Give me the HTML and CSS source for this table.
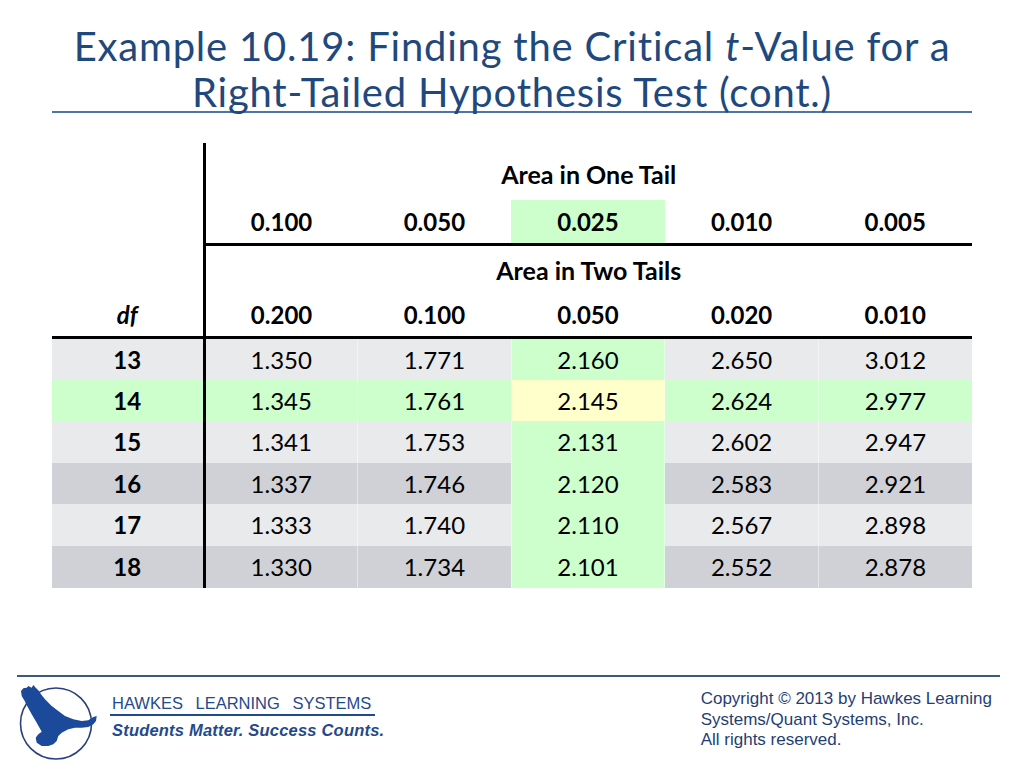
FILE: index.html
```html
<!DOCTYPE html>
<html>
<head>
<meta charset="utf-8">
<link rel="stylesheet" href="styles.css">
</head>
<body>
<div class="slide">
  <header class="head">
    <h1 class="title">Example 10.19: Finding the Critical <i>t</i>-Value for a<br>Right-Tailed Hypothesis Test (cont.)</h1>
    <div class="title-rule"></div>
  </header>

  <table class="ttable">
    <colgroup>
      <col class="c-df"><col class="c-v"><col class="c-v"><col class="c-v"><col class="c-v"><col class="c-v">
    </colgroup>
    <tr class="r-cap1">
      <td class="df"></td>
      <th colspan="5">Area in One Tail</th>
    </tr>
    <tr class="r-one">
      <td class="df"></td>
      <th>0.100</th><th>0.050</th><th class="hl">0.025</th><th>0.010</th><th>0.005</th>
    </tr>
    <tr class="r-cap2">
      <td class="df"></td>
      <th colspan="5">Area in Two Tails</th>
    </tr>
    <tr class="r-two">
      <th class="df"><i>df</i></th>
      <th>0.200</th><th>0.100</th><th>0.050</th><th>0.020</th><th>0.010</th>
    </tr>
    <tr class="row tall light">
      <th class="df">13</th><td>1.350</td><td>1.771</td><td class="hl">2.160</td><td>2.650</td><td>3.012</td>
    </tr>
    <tr class="row green">
      <th class="df">14</th><td>1.345</td><td>1.761</td><td class="yl">2.145</td><td>2.624</td><td>2.977</td>
    </tr>
    <tr class="row light">
      <th class="df">15</th><td>1.341</td><td>1.753</td><td class="hl">2.131</td><td>2.602</td><td>2.947</td>
    </tr>
    <tr class="row dark">
      <th class="df">16</th><td>1.337</td><td>1.746</td><td class="hl">2.120</td><td>2.583</td><td>2.921</td>
    </tr>
    <tr class="row light">
      <th class="df">17</th><td>1.333</td><td>1.740</td><td class="hl">2.110</td><td>2.567</td><td>2.898</td>
    </tr>
    <tr class="row tall dark">
      <th class="df">18</th><td>1.330</td><td>1.734</td><td class="hl">2.101</td><td>2.552</td><td>2.878</td>
    </tr>
  </table>

  <footer class="foot">
    <div class="foot-rule"></div>
    <div class="foot-body">
      <div class="brand">
        <svg class="logo" width="82" height="80" viewBox="0 0 82 80">
          <circle cx="39" cy="40.5" r="35.5" fill="none" stroke="#2b3f80" stroke-width="1.6"/>
          <path fill="#1c4a9a" d="M4 8 L6.3 5.3 L9.7 4.7 L11.3 3 L14.7 4.7 L16.3 2 L18.7 4.7 L21.3 7.3 L24 11.3 L28 16.3 L34.7 23 L41.3 28 L48 33 L56.3 36.3 L64.7 38 L71.3 37.3 L76.3 34 L79.7 33 L79 38 L76.3 41.3 L71.3 44 L64.7 44.7 L58 44.7 L51.3 46.3 L44.7 49.7 L41.3 53 L39.7 58 L36.3 61.3 L31.3 63 L24.7 63 L19.7 59.7 L18.7 54.7 L21.3 51.3 L24.7 48.7 L19.7 39.7 L14.7 31.3 L10.7 24 L7.3 17.3 L4.7 13 Z"/>
        </svg>
        <div class="brand-text">
          <div class="brand-name">HAWKES LEARNING SYSTEMS</div>
          <div class="brand-tag">Students Matter. Success Counts.</div>
        </div>
      </div>
      <div class="copy">Copyright © 2013 by Hawkes Learning<br>Systems/Quant Systems, Inc.<br>All rights reserved.</div>
    </div>
  </footer>
</div>
</body>
</html>
```

FILE: styles.css
```css
html, body {
  margin: 0;
  padding: 0;
  background: #ffffff;
}
.slide {
  width: 1024px;
  height: 768px;
  overflow: hidden;
  position: relative;
}
.head {
  padding-top: 23px;
}
.title {
  margin: 0;
  height: 88px;
  font-family: "Lato", "Open Sans", sans-serif;
  font-weight: 400;
  font-size: 40px;
  line-height: 46px;
  letter-spacing: 0.8px;
  color: #1f497d;
  text-align: center;
}
.title-rule {
  margin: 0 52px;
  height: 2px;
  background: #4f74a8;
}
.ttable {
  margin: 30px 0 0 52px;
  width: 920px;
  border-collapse: collapse;
  table-layout: fixed;
  font-family: "Lato", "Open Sans", sans-serif;
  font-size: 24px;
  color: #000;
}
.c-df { width: 152px; }
.ttable th, .ttable td {
  padding: 0;
  text-align: center;
  vertical-align: middle;
}
.ttable th { font-weight: 700; }
.r-cap1 th, .r-cap2 th { font-size: 25px; }
.ttable .df {
  border-right: 3px solid #000;
}
.r-cap1 { height: 57px; }
.r-cap1 th { padding-top: 4px; }
.r-one { height: 44px; }
.r-one th { border-bottom: 3px solid #000; }
.r-one th.hl { background: #ccffcc; }
.r-cap2 { height: 50px; }
.r-two { height: 43px; }
.r-two th { border-bottom: 3px solid #000; }
.row { height: 41.5px; }
.row.tall { height: 42.5px; }
.row td { font-weight: 400; border-left: 1px solid rgba(255,255,255,0.45); }
.row td:nth-child(2) { border-left: none; }
.light { background: #e9eaec; }
.dark { background: #cfd1d7; }
.green { background: #ccffcc; }
.row td.hl { background: #ccffcc; }
.row td.yl { background: #ffffcc; }

.foot {
  margin-top: 87px;
}
.foot-rule {
  margin: 0 24px 0 17px;
  height: 2px;
  background: #3c5a80;
}
.foot-body {
  display: flex;
  align-items: flex-start;
}
.brand {
  display: flex;
  align-items: flex-start;
  margin-left: 17px;
  padding-top: 6px;
}
.logo {
  display: block;
}
.brand-text {
  margin-left: 11px;
  padding-top: 10px;
  font-family: "Liberation Sans", Arial, sans-serif;
  color: #1f4a8c;
}
.brand-name {
  font-size: 16.5px;
  line-height: 20px;
  word-spacing: 8px;
  padding: 0 2px 1px 2px;
  border-bottom: 2px solid #1f4a8c;
  width: 261px;
}
.brand-tag {
  font-size: 16.5px;
  line-height: 20px;
  font-weight: 700;
  font-style: italic;
  letter-spacing: 0.2px;
  padding-top: 4px;
  padding-left: 2px;
  white-space: nowrap;
}
.copy {
  margin-left: auto;
  margin-right: 32px;
  padding-top: 12px;
  font-family: "Liberation Sans", Arial, sans-serif;
  font-size: 17px;
  line-height: 20.5px;
  color: #1f3f73;
}
```
